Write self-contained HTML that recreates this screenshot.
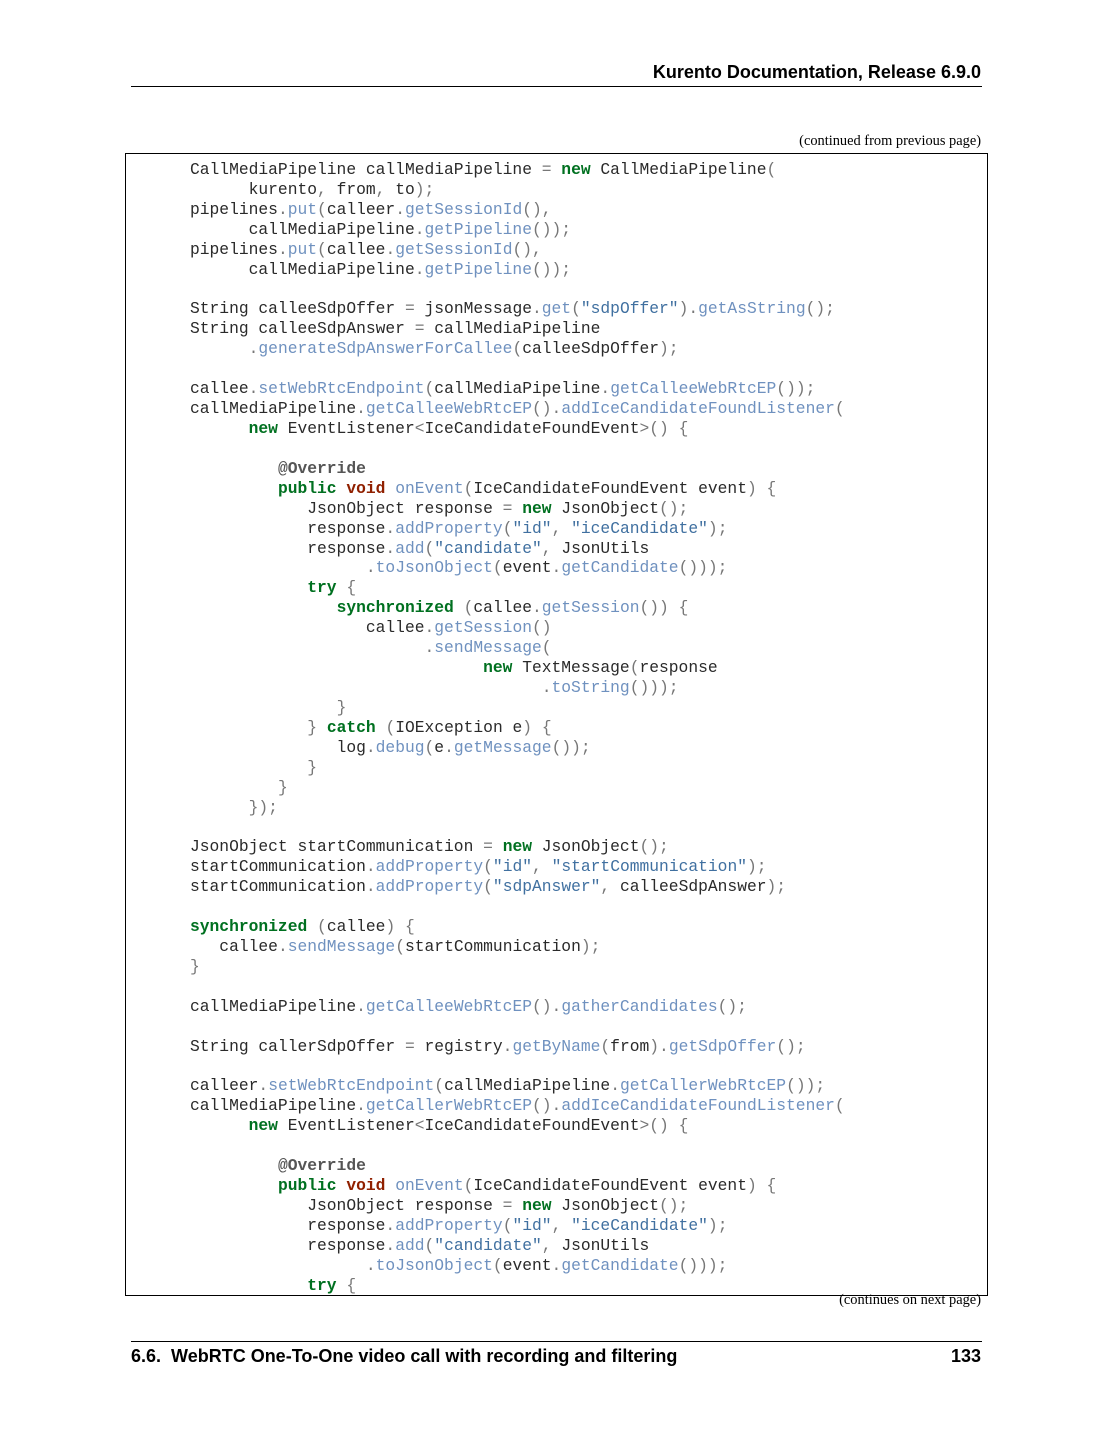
<!DOCTYPE html>
<html><head><meta charset="utf-8">
<style>
html,body{margin:0;padding:0;background:#fff;}
body{width:1113px;height:1440px;position:relative;overflow:hidden;}
.hdr{position:absolute;right:132px;top:62px;font:bold 18px "Liberation Sans",sans-serif;color:#000;white-space:nowrap;}
.rule{position:absolute;left:131px;width:851px;height:1px;background:#000;}
.cont{position:absolute;right:132px;font:14.4px "Liberation Serif",serif;color:#000;white-space:nowrap;}
.box{position:absolute;left:125px;top:153px;width:861px;height:1141px;border:1px solid #000;}
pre{position:absolute;left:190px;top:160px;margin:0;font:16.3px/19.92px "Liberation Mono",monospace;color:#2a2a2a;}
.k{color:#007020;font-weight:bold}
.t{color:#902000;font-weight:bold}
.f{color:#6f91bf}
.s{color:#4070a0}
.p{color:#777}
.d{color:#555;font-weight:bold}
.ftl{position:absolute;left:131px;top:1346px;font:bold 18px "Liberation Sans",sans-serif;color:#000;white-space:nowrap;}
.ftr{position:absolute;right:132px;top:1346px;font:bold 18px "Liberation Sans",sans-serif;color:#000;}
</style></head><body>
<div class="hdr">Kurento Documentation, Release 6.9.0</div>
<div class="rule" style="top:86px"></div>
<div class="cont" style="top:133px">(continued from previous page)</div>
<div class="box"></div>
<pre>CallMediaPipeline callMediaPipeline <span class="p">=</span> <span class="k">new</span> CallMediaPipeline<span class="p">(</span>
      kurento<span class="p">,</span> from<span class="p">,</span> to<span class="p">);</span>
pipelines<span class="p">.</span><span class="f">put</span><span class="p">(</span>calleer<span class="p">.</span><span class="f">getSessionId</span><span class="p">(),</span>
      callMediaPipeline<span class="p">.</span><span class="f">getPipeline</span><span class="p">());</span>
pipelines<span class="p">.</span><span class="f">put</span><span class="p">(</span>callee<span class="p">.</span><span class="f">getSessionId</span><span class="p">(),</span>
      callMediaPipeline<span class="p">.</span><span class="f">getPipeline</span><span class="p">());</span>

String calleeSdpOffer <span class="p">=</span> jsonMessage<span class="p">.</span><span class="f">get</span><span class="p">(</span><span class="s">"sdpOffer"</span><span class="p">).</span><span class="f">getAsString</span><span class="p">();</span>
String calleeSdpAnswer <span class="p">=</span> callMediaPipeline
      <span class="p">.</span><span class="f">generateSdpAnswerForCallee</span><span class="p">(</span>calleeSdpOffer<span class="p">);</span>

callee<span class="p">.</span><span class="f">setWebRtcEndpoint</span><span class="p">(</span>callMediaPipeline<span class="p">.</span><span class="f">getCalleeWebRtcEP</span><span class="p">());</span>
callMediaPipeline<span class="p">.</span><span class="f">getCalleeWebRtcEP</span><span class="p">().</span><span class="f">addIceCandidateFoundListener</span><span class="p">(</span>
      <span class="k">new</span> EventListener<span class="p">&lt;</span>IceCandidateFoundEvent<span class="p">&gt;()</span> <span class="p">{</span>

         <span class="d">@Override</span>
         <span class="k">public</span> <span class="t">void</span> <span class="f">onEvent</span><span class="p">(</span>IceCandidateFoundEvent event<span class="p">)</span> <span class="p">{</span>
            JsonObject response <span class="p">=</span> <span class="k">new</span> JsonObject<span class="p">();</span>
            response<span class="p">.</span><span class="f">addProperty</span><span class="p">(</span><span class="s">"id"</span><span class="p">,</span> <span class="s">"iceCandidate"</span><span class="p">);</span>
            response<span class="p">.</span><span class="f">add</span><span class="p">(</span><span class="s">"candidate"</span><span class="p">,</span> JsonUtils
                  <span class="p">.</span><span class="f">toJsonObject</span><span class="p">(</span>event<span class="p">.</span><span class="f">getCandidate</span><span class="p">()));</span>
            <span class="k">try</span> <span class="p">{</span>
               <span class="k">synchronized</span> <span class="p">(</span>callee<span class="p">.</span><span class="f">getSession</span><span class="p">())</span> <span class="p">{</span>
                  callee<span class="p">.</span><span class="f">getSession</span><span class="p">()</span>
                        <span class="p">.</span><span class="f">sendMessage</span><span class="p">(</span>
                              <span class="k">new</span> TextMessage<span class="p">(</span>response
                                    <span class="p">.</span><span class="f">toString</span><span class="p">()));</span>
               <span class="p">}</span>
            <span class="p">}</span> <span class="k">catch</span> <span class="p">(</span>IOException e<span class="p">)</span> <span class="p">{</span>
               log<span class="p">.</span><span class="f">debug</span><span class="p">(</span>e<span class="p">.</span><span class="f">getMessage</span><span class="p">());</span>
            <span class="p">}</span>
         <span class="p">}</span>
      <span class="p">});</span>

JsonObject startCommunication <span class="p">=</span> <span class="k">new</span> JsonObject<span class="p">();</span>
startCommunication<span class="p">.</span><span class="f">addProperty</span><span class="p">(</span><span class="s">"id"</span><span class="p">,</span> <span class="s">"startCommunication"</span><span class="p">);</span>
startCommunication<span class="p">.</span><span class="f">addProperty</span><span class="p">(</span><span class="s">"sdpAnswer"</span><span class="p">,</span> calleeSdpAnswer<span class="p">);</span>

<span class="k">synchronized</span> <span class="p">(</span>callee<span class="p">)</span> <span class="p">{</span>
   callee<span class="p">.</span><span class="f">sendMessage</span><span class="p">(</span>startCommunication<span class="p">);</span>
<span class="p">}</span>

callMediaPipeline<span class="p">.</span><span class="f">getCalleeWebRtcEP</span><span class="p">().</span><span class="f">gatherCandidates</span><span class="p">();</span>

String callerSdpOffer <span class="p">=</span> registry<span class="p">.</span><span class="f">getByName</span><span class="p">(</span>from<span class="p">).</span><span class="f">getSdpOffer</span><span class="p">();</span>

calleer<span class="p">.</span><span class="f">setWebRtcEndpoint</span><span class="p">(</span>callMediaPipeline<span class="p">.</span><span class="f">getCallerWebRtcEP</span><span class="p">());</span>
callMediaPipeline<span class="p">.</span><span class="f">getCallerWebRtcEP</span><span class="p">().</span><span class="f">addIceCandidateFoundListener</span><span class="p">(</span>
      <span class="k">new</span> EventListener<span class="p">&lt;</span>IceCandidateFoundEvent<span class="p">&gt;()</span> <span class="p">{</span>

         <span class="d">@Override</span>
         <span class="k">public</span> <span class="t">void</span> <span class="f">onEvent</span><span class="p">(</span>IceCandidateFoundEvent event<span class="p">)</span> <span class="p">{</span>
            JsonObject response <span class="p">=</span> <span class="k">new</span> JsonObject<span class="p">();</span>
            response<span class="p">.</span><span class="f">addProperty</span><span class="p">(</span><span class="s">"id"</span><span class="p">,</span> <span class="s">"iceCandidate"</span><span class="p">);</span>
            response<span class="p">.</span><span class="f">add</span><span class="p">(</span><span class="s">"candidate"</span><span class="p">,</span> JsonUtils
                  <span class="p">.</span><span class="f">toJsonObject</span><span class="p">(</span>event<span class="p">.</span><span class="f">getCandidate</span><span class="p">()));</span>
            <span class="k">try</span> <span class="p">{</span></pre>
<div class="cont" style="top:1292px">(continues on next page)</div>
<div class="rule" style="top:1341px"></div>
<div class="ftl">6.6.&nbsp; WebRTC One-To-One video call with recording and filtering</div>
<div class="ftr">133</div>
</body></html>
